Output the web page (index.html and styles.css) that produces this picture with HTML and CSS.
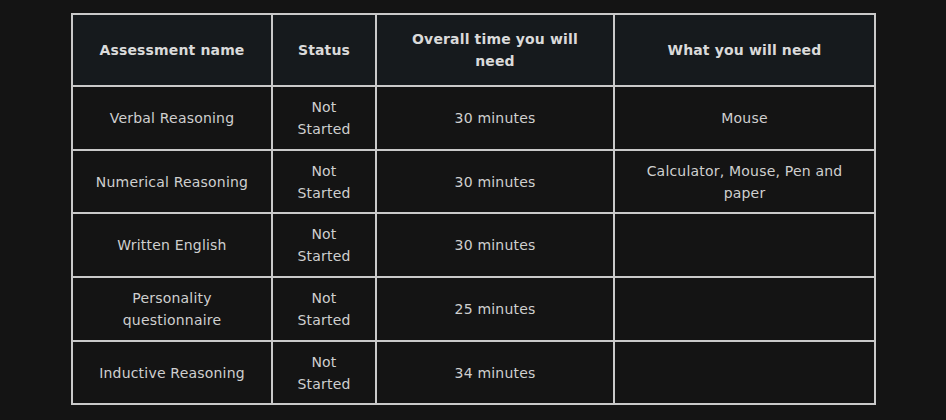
FILE: index.html
```html
<!DOCTYPE html>
<html lang="en">
<head>
<meta charset="utf-8">
<title>Assessments</title>
<link rel="stylesheet" href="styles.css">
</head>
<body>
<div class="page">
  <table class="assess">
    <colgroup>
      <col class="c1"><col class="c2"><col class="c3"><col class="c4">
    </colgroup>
    <thead>
      <tr>
        <th>Assessment name</th>
        <th>Status</th>
        <th>Overall time you will need</th>
        <th>What you will need</th>
      </tr>
    </thead>
    <tbody>
      <tr class="r64">
        <td>Verbal Reasoning</td>
        <td>Not Started</td>
        <td>30 minutes</td>
        <td>Mouse</td>
      </tr>
      <tr class="r63">
        <td>Numerical Reasoning</td>
        <td>Not Started</td>
        <td>30 minutes</td>
        <td class="need">Calculator, Mouse, Pen and paper</td>
      </tr>
      <tr class="r64">
        <td>Written English</td>
        <td>Not Started</td>
        <td>30 minutes</td>
        <td></td>
      </tr>
      <tr class="r64">
        <td class="name">Personality questionnaire</td>
        <td>Not Started</td>
        <td>25 minutes</td>
        <td></td>
      </tr>
      <tr class="r63">
        <td>Inductive Reasoning</td>
        <td>Not Started</td>
        <td>34 minutes</td>
        <td></td>
      </tr>
    </tbody>
  </table>
</div>
</body>
</html>
```

FILE: styles.css
```css
html, body {
  margin: 0;
  background: #141414;
}
body {
  width: 946px;
  height: 420px;
  overflow: hidden;
  font-family: "DejaVu Sans", Verdana, sans-serif;
  font-size: 14px;
  line-height: 22px;
  color: #cfcfcf;
}
.page {
  padding: 13px 0 0 71px;
}
.assess {
  border-collapse: separate;
  border-spacing: 0;
  table-layout: fixed;
  width: 805px;
  border-top: 2px solid #c9c9c9;
  border-left: 2px solid #c9c9c9;
}
.c1 { width: 200px; }
.c2 { width: 104px; }
.c3 { width: 238px; }
.c4 { width: 261px; }
.assess th,
.assess td {
  box-sizing: border-box;
  border-right: 2px solid #c9c9c9;
  border-bottom: 2px solid #c9c9c9;
  text-align: center;
  vertical-align: middle;
  padding: 0 18px;
  letter-spacing: 0.2px;
}
.assess th {
  height: 72px;
  background: #161a1d;
  font-weight: bold;
  color: #dadada;
  letter-spacing: 0.15px;
}
.assess td {
  background: #141414;
}
.r64 td { height: 64px; }
.r63 td { height: 63px; }
.assess td.need { padding: 0 26px; }
.assess td.name { padding: 0 40px; }
```
